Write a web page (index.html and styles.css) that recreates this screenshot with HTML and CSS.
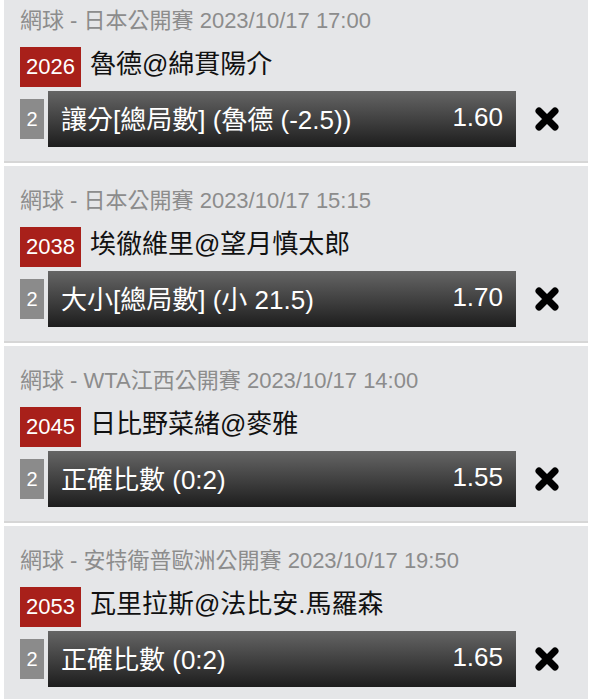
FILE: index.html
```html
<!DOCTYPE html>
<html lang="zh-Hant">
<head>
    <meta charset="UTF-8">
    <meta name="viewport" content="width=device-width, initial-scale=1.0">
    <title>投注單</title>
    <link rel="stylesheet" href="styles.css">
</head>
<body>
    <section class="slip">
        <article class="bet">
            <p class="bet-league">網球 - 日本公開賽 2023/10/17 17:00</p>
            <div class="bet-match">
                <span class="bet-code">2026</span>
                <span class="bet-teams">魯德@綿貫陽介</span>
            </div>
            <div class="bet-row">
                <span class="bet-num">2</span>
                <div class="bet-pick">
                    <span class="bet-option">讓分[總局數] (魯德 (-2.5))</span>
                    <span class="bet-odds">1.60</span>
                </div>
                <button class="bet-remove" aria-label="移除">
                    <svg width="26" height="26" viewBox="0 0 26 26"><path d="M5 5 L21 21 M21 5 L5 21" stroke="#000" stroke-width="7" stroke-linecap="round"/></svg>
                </button>
            </div>
        </article>
        <article class="bet">
            <p class="bet-league">網球 - 日本公開賽 2023/10/17 15:15</p>
            <div class="bet-match">
                <span class="bet-code">2038</span>
                <span class="bet-teams">埃徹維里@望月慎太郎</span>
            </div>
            <div class="bet-row">
                <span class="bet-num">2</span>
                <div class="bet-pick">
                    <span class="bet-option">大小[總局數] (小 21.5)</span>
                    <span class="bet-odds">1.70</span>
                </div>
                <button class="bet-remove" aria-label="移除">
                    <svg width="26" height="26" viewBox="0 0 26 26"><path d="M5 5 L21 21 M21 5 L5 21" stroke="#000" stroke-width="7" stroke-linecap="round"/></svg>
                </button>
            </div>
        </article>
        <article class="bet">
            <p class="bet-league">網球 - WTA江西公開賽 2023/10/17 14:00</p>
            <div class="bet-match">
                <span class="bet-code">2045</span>
                <span class="bet-teams">日比野菜緒@麥雅</span>
            </div>
            <div class="bet-row">
                <span class="bet-num">2</span>
                <div class="bet-pick">
                    <span class="bet-option">正確比數 (0:2)</span>
                    <span class="bet-odds">1.55</span>
                </div>
                <button class="bet-remove" aria-label="移除">
                    <svg width="26" height="26" viewBox="0 0 26 26"><path d="M5 5 L21 21 M21 5 L5 21" stroke="#000" stroke-width="7" stroke-linecap="round"/></svg>
                </button>
            </div>
        </article>
        <article class="bet">
            <p class="bet-league">網球 - 安特衛普歐洲公開賽 2023/10/17 19:50</p>
            <div class="bet-match">
                <span class="bet-code">2053</span>
                <span class="bet-teams">瓦里拉斯@法比安.馬羅森</span>
            </div>
            <div class="bet-row">
                <span class="bet-num">2</span>
                <div class="bet-pick">
                    <span class="bet-option">正確比數 (0:2)</span>
                    <span class="bet-odds">1.65</span>
                </div>
                <button class="bet-remove" aria-label="移除">
                    <svg width="26" height="26" viewBox="0 0 26 26"><path d="M5 5 L21 21 M21 5 L5 21" stroke="#000" stroke-width="7" stroke-linecap="round"/></svg>
                </button>
            </div>
        </article>
    </section>
</body>
</html>
```

FILE: styles.css
```css
html {
  box-sizing: border-box;
  font-family: "Liberation Sans", "Noto Sans CJK TC", sans-serif;
}

*,
*:before,
*:after {
  box-sizing: inherit;
}

body {
  margin: 0;
  background-color: #fff;
}

/* list is scrolled a little, first card starts above the top */
.slip {
  margin-top: -14px;
}

.bet {
  margin: 0 8px 3px 4px;
  padding: 22px 16px 14px;
  background-color: #e5e6e8;
  border-bottom: 2px solid #d6d6d6;
}

.bet-league {
  margin: 0 0 13px;
  font-size: 22px;
  line-height: 26px;
  color: #8c8c8c;
  white-space: nowrap;
}

.bet-match {
  display: flex;
  align-items: flex-start;
  height: 40px;
  margin-bottom: 4px;
}

.bet-code {
  display: flex;
  align-items: center;
  height: 40px;
  padding: 0 6px;
  background-color: #a8201a;
  color: #fff;
  font-size: 22px;
}

.bet-teams {
  margin-left: 9px;
  font-size: 26px;
  line-height: 34px;
  color: #111;
  white-space: nowrap;
}

.bet-row {
  display: flex;
  align-items: center;
  height: 56px;
}

.bet-num {
  display: flex;
  align-items: center;
  justify-content: center;
  width: 24px;
  height: 40px;
  background-color: #8b8b8b;
  color: #fff;
  font-size: 20px;
}

.bet-pick {
  flex: 1;
  display: flex;
  align-items: center;
  justify-content: space-between;
  height: 56px;
  margin-left: 4px;
  padding: 0 13px 4px;
  background: linear-gradient(#656565, #3e3e3e 55%, #1d1d1d);
  color: #fff;
  font-size: 26px;
  white-space: nowrap;
}

.bet-remove {
  display: flex;
  justify-content: flex-end;
  width: 56px;
  padding: 0 12px 0 0;
  border: none;
  background: none;
}
```
